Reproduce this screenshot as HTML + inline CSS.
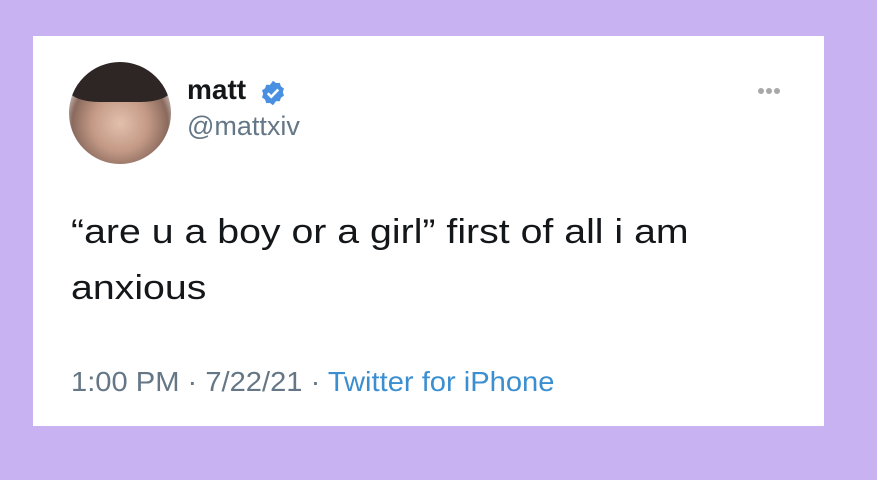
<!DOCTYPE html>
<html><head><style>
body{margin:0;width:877px;height:480px;background:#c9b2f2;position:relative;overflow:hidden;font-family:"Liberation Sans",Arial,sans-serif}
.card{position:absolute;left:33px;top:36px;width:791px;height:390px;background:#fff}
.av{position:absolute;left:69px;top:62px;width:102px;height:102px;border-radius:50%;background:radial-gradient(circle at 50% 60%,#e2c0ad 0,#c49a86 35%,#8a6a5e 60%,#ddd6d2 75%);overflow:hidden}
.hair{position:absolute;left:0;top:0;width:102px;height:40px;background:#2d2624;border-radius:50% 50% 30% 30%}
.t{position:absolute;white-space:nowrap;transform-origin:0 0}
.d{position:absolute;top:88px;width:6px;height:6px;border-radius:50%;background:#a8a8a8}
</style></head><body>
<div class="card"></div>
<div class="av"><div class="hair"></div></div>
<div class="t" style="left:187px;top:74px;font-size:28px;font-weight:bold;color:#14171a">matt</div>
<svg style="position:absolute;left:259px;top:79px" width="28" height="28" viewBox="0 0 24 24"><path fill="#4a90e2" d="M12 1.5l2.6 1.9 3.2-.1 1 3 2.6 1.9-1 3 1 3-2.6 1.9-1 3-3.2-.1L12 22.5l-2.6-1.9-3.2.1-1-3-2.6-1.9 1-3-1-3 2.6-1.9 1-3 3.2.1z"/><path d="M7.5 12.2l3 3 6-6.2" stroke="#fff" stroke-width="2.2" fill="none"/></svg>
<div class="t" style="left:187px;top:111px;font-size:27px;color:#657786">@mattxiv</div>
<div class="d" style="left:758px"></div><div class="d" style="left:766px"></div><div class="d" style="left:774px"></div>
<div class="t" style="left:71px;top:213px;font-size:34px;color:#14171a;transform:scaleX(1.155)">“are u a boy or a girl” first of all i am</div>
<div class="t" style="left:71px;top:269px;font-size:34px;color:#14171a;transform:scaleX(1.155)">anxious</div>
<div class="t" style="left:71px;top:366px;font-size:28px;color:#657786;transform:scaleX(1.04)">1:00 PM · 7/22/21 · <span style="color:#3b8fd0">Twitter for iPhone</span></div>
</body></html>
